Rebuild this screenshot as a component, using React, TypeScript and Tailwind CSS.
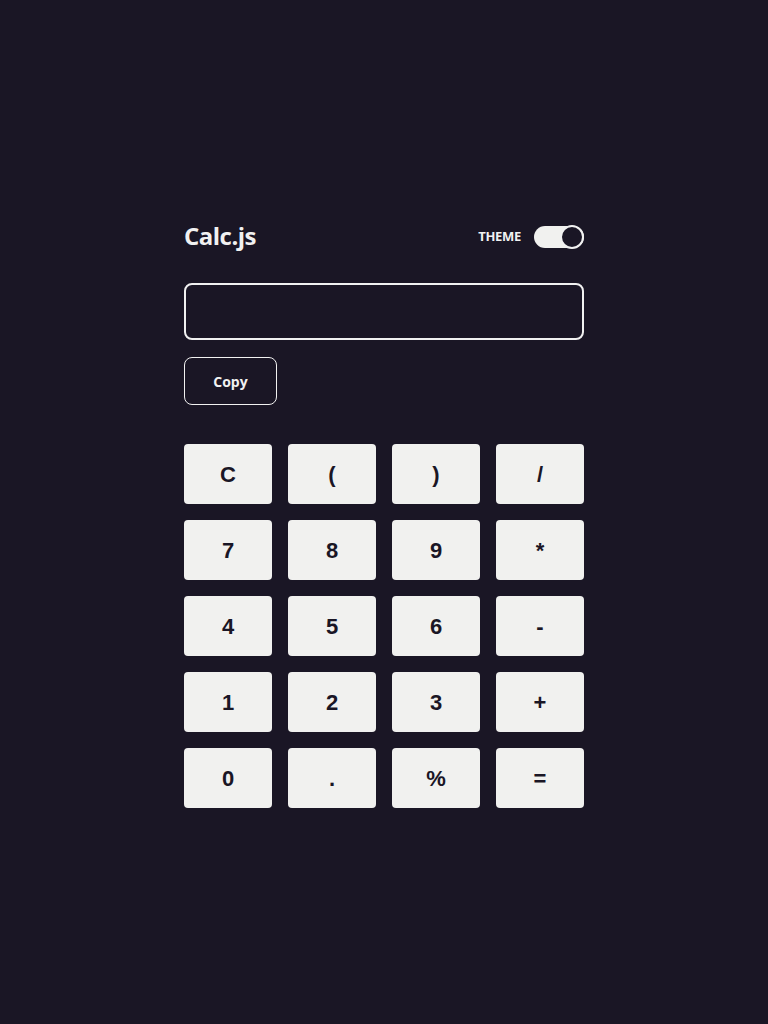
import React, { useState } from 'react';

const keys = ['C', '(', ')', '/', '7', '8', '9', '*', '4', '5', '6', '-', '1', '2', '3', '+', '0', '.', '%', '='];

const App: React.FC = () => {
  const [value, setValue] = useState('');
  const [dark, setDark] = useState(true);

  const press = (k: string) => {
    if (k === 'C') return setValue('');
    if (k === '=') {
      try {
        // eslint-disable-next-line no-new-func
        setValue(String(Function(`return (${value})`)()));
      } catch {
        setValue('Error');
      }
      return;
    }
    setValue(value + k);
  };

  return (
    <div className="min-h-screen bg-[#1a1625] font-['Open_Sans',sans-serif]">
      <div className="w-[400px] mx-auto pt-[220px]">
        <div className="flex items-center justify-between h-[32px]">
          <h1 className="text-[24px] font-bold text-[#f1f1f1] tracking-[-0.5px] leading-[28px] -mt-[1px]">Calc.js</h1>
          <div className="flex items-center gap-[13px] mt-[1px]">
            <span className="text-[13px] font-bold text-[#f1f1f1] tracking-[-0.3px]">THEME</span>
            <button
              onClick={() => setDark(!dark)}
              className="relative w-[50px] h-[22px] rounded-full bg-[#f1f1ef]"
            >
              <span className="absolute right-0 top-1/2 -translate-y-1/2 w-[24px] h-[24px] rounded-full bg-[#1a1625] border-2 border-[#f1f1f1]" />
            </button>
          </div>
        </div>

        <input
          value={value}
          readOnly
          className="mt-[31px] block w-full h-[57px] rounded-lg border-2 border-[#f1f1f1] bg-transparent px-4 text-[24px] text-[#f1f1f1] outline-none"
        />

        <button
          onClick={() => navigator.clipboard?.writeText(value)}
          className="mt-[17px] block w-[93px] h-[48px] rounded-lg border border-[#f1f1f1] text-[14px] font-bold text-[#f1f1f1]"
        >
          Copy
        </button>

        <div className="mt-[39px] grid grid-cols-4 gap-4">
          {keys.map((k) => (
            <button
              key={k}
              onClick={() => press(k)}
              className="h-[60px] rounded bg-[#f1f1ef] text-[22px] font-bold text-[#1a1625] font-['Liberation_Sans',Arial,sans-serif]"
            >
              {k}
            </button>
          ))}
        </div>
      </div>
    </div>
  );
};

export default App;
